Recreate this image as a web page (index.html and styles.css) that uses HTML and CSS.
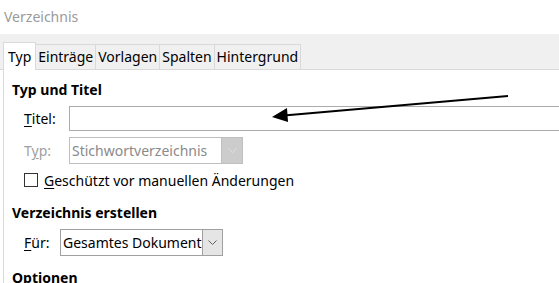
FILE: index.html
```html
<!DOCTYPE html>
<html lang="de">
<head>
    <meta charset="UTF-8">
    <title>Verzeichnis</title>
    <link rel="stylesheet" href="styles.css">
</head>
<body>
    <div class="titlebar">Verzeichnis</div>
    <div class="tabbar">
        <div class="tab active">Typ</div>
        <div class="tab">Einträge</div>
        <div class="tab">Vorlagen</div>
        <div class="tab">Spalten</div>
        <div class="tab">Hintergrund</div>
    </div>
    <div class="panel">
        <div class="section-title">Typ und Titel</div>
        <div class="row row-title">
            <label class="label"><u>T</u>itel:</label>
            <div class="textbox"></div>
        </div>
        <div class="row row-type">
            <label class="label disabled">T<u>y</u>p:</label>
            <div class="select select-disabled">
                <span class="select-text">Stichwortverzeichnis</span>
                <span class="select-btn">
                    <svg width="9" height="5" viewBox="0 0 9 5"><path d="M0.5 0.5 L4.5 4.5 L8.5 0.5" fill="none" stroke="#e0e0e0" stroke-width="1"/></svg>
                </span>
            </div>
        </div>
        <div class="row row-check">
            <span class="checkbox"></span>
            <span><u>G</u>eschützt vor manuellen Änderungen</span>
        </div>
        <div class="section-title section-create">Verzeichnis erstellen</div>
        <div class="row row-for">
            <label class="label"><u>F</u>ür:</label>
            <div class="select select-for">
                <span class="select-text">Gesamtes Dokument</span>
                <span class="select-btn">
                    <svg width="9" height="5" viewBox="0 0 9 5"><path d="M0.5 0.5 L4.5 4.5 L8.5 0.5" fill="none" stroke="#606060" stroke-width="1"/></svg>
                </span>
            </div>
        </div>
        <div class="section-title section-options">Optionen</div>
    </div>

    <svg class="arrow" width="559" height="283" viewBox="0 0 559 283">
        <line x1="508" y1="96" x2="284" y2="115.5" stroke="#000" stroke-width="2"/>
        <polygon points="272,117 287,108 288,122" fill="#000"/>
    </svg>
</body>
</html>
```

FILE: styles.css
```css
body {
    margin: 0;
    width: 559px;
    height: 283px;
    overflow: hidden;
    position: relative;
    background: #fff;
    font-family: "Noto Sans", "Open Sans", sans-serif;
    font-size: 14px;
    color: #000;
}

.titlebar {
    height: 34px;
    line-height: 34px;
    padding-left: 4px;
    color: #9a9a9a;
    font-size: 14px;
}

.tabbar {
    height: 35px;
    background: #f0f0f0;
    border-bottom: 1px solid #d9d9d9;
    display: flex;
    align-items: flex-end;
    padding-left: 3px;
}

.tab {
    height: 24px;
    line-height: 24px;
    padding: 0 2px;
    border: 1px solid #d9d9d9;
    border-bottom: none;
    border-left: none;
    background: #f0f0f0;
}

.tab.active {
    height: 27px;
    line-height: 27px;
    margin-bottom: -1px;
    background: #fff;
    border-left: 1px solid #d9d9d9;
    padding: 0 4px;
}

.panel {
    margin-left: 3px;
    border-left: 1px solid #d9d9d9;
    padding-left: 8px;
    height: 220px;
}

.section-title {
    font-weight: bold;
    padding-top: 10px;
    height: 25px;
    line-height: 20px;
    white-space: nowrap;
}

.row {
    display: flex;
    align-items: center;
    white-space: nowrap;
}

.label {
    flex-shrink: 0;
    width: 45px;
    padding-left: 12px;
}

.label u,
.row u {
    text-decoration-thickness: 1px;
    text-underline-offset: 2px;
}

.disabled {
    color: #a0a0a0;
}

.row-title {
    height: 26px;
}

.textbox {
    flex-shrink: 0;
    width: 520px;
    height: 23px;
    border: 1px solid #ababab;
    background: #fff;
}

.row-type {
    margin-top: 6px;
    height: 27px;
}

.select {
    flex-shrink: 0;
    display: flex;
    height: 25px;
    border: 1px solid #a0a0a0;
    background: #fff;
}

.select-text {
    padding-left: 2px;
    line-height: 25px;
    flex: 1;
}

.select-btn {
    width: 20px;
    display: flex;
    align-items: center;
    justify-content: center;
    background: #e5e5e5;
    border-left: 1px solid #a0a0a0;
}

.select-disabled {
    width: 172px;
    border-color: #bfbfbf;
}

.select-disabled .select-text {
    color: #8a8a8a;
}

.select-disabled .select-btn {
    background: #cccccc;
    border-left-color: #bfbfbf;
}

.row-check {
    margin-top: 3px;
    height: 26px;
    padding-left: 12px;
}

.checkbox {
    width: 12px;
    height: 12px;
    border: 1px solid #333;
    margin-right: 6px;
}

.section-create {
    padding-top: 10px;
}

.row-for {
    height: 28px;
}

.row-for .label {
    width: 36px;
}

.select-for {
    width: 161px;
}

.section-options {
    padding-top: 12px;
}

.arrow {
    position: absolute;
    left: 0;
    top: 0;
    pointer-events: none;
}
```
